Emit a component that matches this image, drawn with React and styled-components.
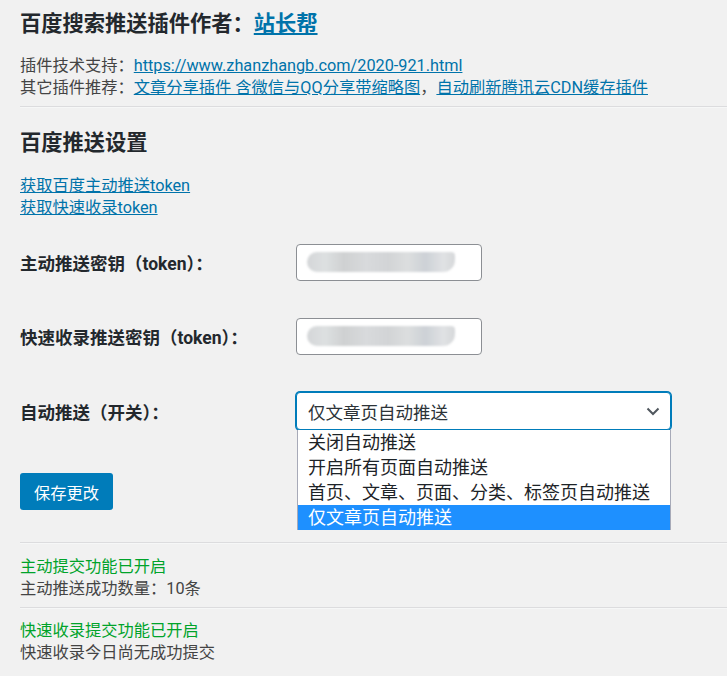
import React from "react";
import styled, { createGlobalStyle } from "styled-components";

const Global = createGlobalStyle`
  html, body { margin: 0; padding: 0; background: #f1f1f1; }
  body {
    font-family: Roboto, "Noto Sans CJK SC", sans-serif;
    font-size: 16.25px;
    color: #444;
    overflow: hidden;
  }
`;

const Wrap = styled.div`
  padding: 10px 0 0 20px;
  width: 707px;
`;

const Title = styled.h1`
  margin: 0;
  font-size: 21.25px;
  line-height: 28px;
  font-weight: 700;
  color: #23282d;
`;

const TitleLink = styled.a`
  color: #0073aa;
  text-decoration: underline;
`;

const Para = styled.p`
  margin: ${(p) => p.$mt || 0}px 0 0 0;
  line-height: 22px;
  color: ${(p) => p.$color || "#444"};
`;

const Link = styled.a`
  color: #0073aa;
  text-decoration: underline;
`;

const Rule = styled.hr`
  margin: ${(p) => p.$mt}px 0 0 0;
  border: 0;
  border-top: 1px solid #dcdcde;
  border-bottom: 1px solid #f6f7f7;
  height: 0;
`;

const Heading = styled.h2`
  margin: 21px 0 0 0;
  font-size: 21.25px;
  line-height: 28px;
  font-weight: 700;
  color: #23282d;
`;

const Table = styled.div`
  margin-top: 6px;
  display: flex;
  flex-direction: column;
`;

const Row = styled.div`
  display: grid;
  grid-template-columns: 276px 1fr;
  align-items: center;
  height: ${(p) => p.$h || 74}px;
`;

const Label = styled.div`
  font-size: 17.5px;
  font-weight: 700;
  color: #23282d;
`;

const Field = styled.div`
  width: 186px;
  height: 37px;
  box-sizing: border-box;
  border: 1px solid #8c8f94;
  border-radius: 4px;
  background: #fff;
  display: flex;
  align-items: center;
  padding-left: 10px;
`;

const Smudge = styled.div`
  width: 148px;
  height: 20px;
  border-radius: 10px 4px 12px 10px;
  background: linear-gradient(
    90deg,
    #d4d6d8 0%, #dde0e1 12%, #cfd1d2 25%, #d8dadc 40%,
    #d2d4d6 55%, #dcdedf 68%, #cdd1d6 80%, #e0e2e4 92%, #d6d8da 100%
  );
  filter: blur(1.2px);
`;

const SelectBox = styled.div`
  position: relative;
  width: 375px;
`;

const SelectField = styled.div`
  height: 38px;
  box-sizing: border-box;
  border: 1px solid #007cba;
  box-shadow: 0 0 0 1px #007cba;
  border-radius: 4px;
  background: #fff;
  display: flex;
  align-items: center;
  justify-content: space-between;
  padding: 0 10px 0 11px;
  color: #2c3338;
  font-size: 17.5px;
`;

const Menu = styled.div`
  position: absolute;
  left: 1px;
  right: 0;
  top: 38px;
  background: #fff;
  border-left: 1px solid #a7aab8;
  border-right: 1px solid #a7aab8;
  z-index: 2;
`;

const Option = styled.div`
  height: 25px;
  line-height: 25px;
  padding-left: 10px;
  font-size: 18px;
  white-space: nowrap;
  color: ${(p) => (p.$active ? "#fff" : "#1d2327")};
  background: ${(p) => (p.$active ? "#1e90ff" : "transparent")};
`;

const Button = styled.button`
  margin-top: 24px;
  width: 93px;
  height: 37px;
  border: 0;
  border-radius: 3px;
  background: #007cba;
  color: #fff;
  font-family: inherit;
  font-size: 16.25px;
  padding: 0;
`;

const Chevron = () => (
  <svg width="14" height="9" viewBox="0 0 14 9">
    <path d="M1.5 1.5 L7 7 L12.5 1.5" fill="none" stroke="#50575e" strokeWidth="2" />
  </svg>
);

export default function App() {
  return (
    <>
      <Global />
      <Wrap>
        <Title>
          百度搜索推送插件作者：<TitleLink href="#">站长帮</TitleLink>
        </Title>
        <Para $mt={17}>
          插件技术支持：<Link href="#">https://www.zhanzhangb.com/2020-921.html</Link>
        </Para>
        <Para>
          其它插件推荐：<Link href="#">文章分享插件 含微信与QQ分享带缩略图</Link>，
          <Link href="#">自动刷新腾讯云CDN缓存插件</Link>
        </Para>
        <Rule $mt={7} />
        <Heading>百度推送设置</Heading>
        <Para $mt={18}>
          <Link href="#">获取百度主动推送token</Link>
        </Para>
        <Para>
          <Link href="#">获取快速收录token</Link>
        </Para>
        <Table>
          <Row>
            <Label>主动推送密钥（token）：</Label>
            <Field>
              <Smudge />
            </Field>
          </Row>
          <Row>
            <Label>快速收录推送密钥（token）：</Label>
            <Field>
              <Smudge />
            </Field>
          </Row>
          <Row $h={76}>
            <Label>自动推送（开关）：</Label>
            <SelectBox>
              <SelectField>
                <span>仅文章页自动推送</span>
                <Chevron />
              </SelectField>
              <Menu>
                <Option>关闭自动推送</Option>
                <Option>开启所有页面自动推送</Option>
                <Option>首页、文章、页面、分类、标签页自动推送</Option>
                <Option $active>仅文章页自动推送</Option>
              </Menu>
            </SelectBox>
          </Row>
        </Table>
        <Button>保存更改</Button>
        <Rule $mt={32} />
        <Para $mt={12} $color="#00a32a">主动提交功能已开启</Para>
        <Para>主动推送成功数量：10条</Para>
        <Rule $mt={7} />
        <Para $mt={11} $color="#00a32a">快速收录提交功能已开启</Para>
        <Para>快速收录今日尚无成功提交</Para>
      </Wrap>
    </>
  );
}
